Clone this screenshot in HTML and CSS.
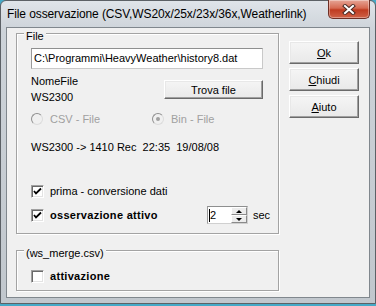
FILE: index.html
```html
<!DOCTYPE html>
<html lang="it">
<head>
    <meta charset="UTF-8">
    <title>File osservazione</title>
    <link rel="stylesheet" href="styles.css">
</head>
<body>
    <div class="window">
        <div class="titlebar">
            <span class="title">File osservazione (CSV,WS20x/25x/23x/36x,Weatherlink)</span>
            <div class="close-btn">
                <svg width="14" height="11" viewBox="0 0 14 11">
                    <path d="M3 2 L11 9 M11 2 L3 9" stroke="#4a2a24" stroke-width="4" stroke-linecap="square" fill="none"/>
                    <path d="M3 2 L11 9 M11 2 L3 9" stroke="#fff" stroke-width="2" stroke-linecap="square" fill="none"/>
                </svg>
            </div>
        </div>

        <div class="client">
            <div class="main-col">
                <div class="group file-group">
                    <span class="group-label">File</span>
                    <div class="path-input">C:\Programmi\HeavyWeather\history8.dat</div>

                    <div class="name-row">
                        <div class="name-labels">
                            <div>NomeFile</div>
                            <div>WS2300</div>
                        </div>
                        <div class="btn find-btn">Trova file</div>
                    </div>

                    <div class="radio-row">
                        <div class="radio-item csv-item">
                            <span class="radio"></span>
                            <span>CSV - File</span>
                        </div>
                        <div class="radio-item">
                            <span class="radio checked"></span>
                            <span>Bin - File</span>
                        </div>
                    </div>

                    <div class="status">WS2300 -&gt; 1410 Rec&nbsp; 22:35&nbsp; 19/08/08</div>

                    <div class="check-row first-check">
                        <span class="checkbox checked">
                            <svg width="9" height="9" viewBox="0 0 9 9"><path d="M1 4 L3 6.5 L8 1.5" stroke="#000" stroke-width="1.8" fill="none"/></svg>
                        </span>
                        <span>prima - conversione dati</span>
                    </div>

                    <div class="check-row second-check">
                        <span class="checkbox checked">
                            <svg width="9" height="9" viewBox="0 0 9 9"><path d="M1 4 L3 6.5 L8 1.5" stroke="#000" stroke-width="1.8" fill="none"/></svg>
                        </span>
                        <span class="bold-label">osservazione attivo</span>
                        <div class="spin-box">
                            <div class="spin-field"><span class="caret"></span>2</div>
                            <div class="spin-arrows">
                                <div class="spin-btn"><span class="arrow-up"></span></div>
                                <div class="spin-btn"><span class="arrow-down"></span></div>
                            </div>
                        </div>
                        <span class="unit">sec</span>
                    </div>
                </div>

                <div class="group merge-group">
                    <span class="group-label">(ws_merge.csv)</span>
                    <div class="check-row">
                        <span class="checkbox"></span>
                        <span class="bold-label">attivazione</span>
                    </div>
                </div>
            </div>

            <div class="side-buttons">
                <div class="btn side-btn"><u>O</u>k</div>
                <div class="btn side-btn"><u>C</u>hiudi</div>
                <div class="btn side-btn"><u>A</u>iuto</div>
            </div>
        </div>
    </div>
</body>
</html>
```

FILE: styles.css
```css
* {
    box-sizing: border-box;
}

body {
    margin: 0;
    background-color: #45a9c7;
    font-family: 'Liberation Sans', Arial, sans-serif;
    font-size: 11px;
    color: #000;
}

.window {
    width: 376px;
    height: 304px;
    display: flex;
    flex-direction: column;
    padding: 0 5px 5px 5px;
    border: 1px solid #5c6166;
    border-radius: 6px 6px 0 0;
    background: linear-gradient(#dfe4e9, #cdd3d9 30px, #c1c7cd);
}

.titlebar {
    height: 26px;
    display: flex;
    align-items: center;
}

.title {
    padding-left: 1px;
    font-size: 12px;
    letter-spacing: -0.1px;
    color: #000;
    white-space: nowrap;
}

.close-btn {
    margin-left: auto;
    align-self: flex-start;
    margin-top: -1px;
    width: 42px;
    height: 19px;
    display: flex;
    align-items: center;
    justify-content: center;
    border: 1px solid #6e2f25;
    border-top: none;
    border-radius: 0 0 5px 5px;
    background: linear-gradient(#e6a596, #d66a52 45%, #bf3b20 55%, #cf6247);
    box-shadow: inset 0 0 0 1px rgba(255, 255, 255, 0.35);
}

.client {
    flex: 1;
    display: flex;
    align-items: flex-start;
    background-color: #f0f0f0;
    border: 1px solid #80878d;
}

.main-col {
    padding: 5px 0 0 9px;
}

.group {
    position: relative;
    width: 263px;
    border: 1px solid #a3a3a3;
    box-shadow: inset 1px 1px #fff, 1px 1px #fff;
}

.group-label {
    position: absolute;
    top: -4px;
    left: 7px;
    padding: 0 2px;
    line-height: 13px;
    background-color: #f0f0f0;
}

.file-group {
    height: 201px;
    padding: 14px 0 0 14px;
}

.path-input {
    width: 232px;
    height: 21px;
    padding: 0 2px;
    line-height: 19px;
    background-color: #fff;
    border: 1px solid;
    border-color: #8e8f8f #c9c9c9 #c9c9c9 #9a9a9a;
    white-space: nowrap;
}

.name-row {
    display: flex;
    margin-top: 4px;
}

.name-labels {
    width: 132px;
    line-height: 16px;
}

.btn {
    display: flex;
    align-items: center;
    justify-content: center;
    border: 1px solid;
    border-color: #fff #6a6a6a #6a6a6a #fff;
    background: linear-gradient(#f5f5f5, #e9e9e9);
    box-shadow: inset -1px -1px #a0a0a0, inset 1px 1px #e8e8e8;
}

.find-btn {
    width: 99px;
    height: 19px;
    margin-top: 7px;
    margin-left: 1px;
}

.radio-row {
    display: flex;
    margin-top: 6px;
    line-height: 16px;
    color: #a0a0a0;
}

.radio-item {
    display: flex;
    align-items: center;
    gap: 7px;
}

.csv-item {
    width: 121px;
}

.radio {
    width: 12px;
    height: 12px;
    display: flex;
    align-items: center;
    justify-content: center;
    border-radius: 50%;
    border: 1px solid;
    border-color: #8f8f8f #dcdcdc #dcdcdc #8f8f8f;
    background-color: #f0f0f0;
}

.radio.checked::after {
    content: "";
    width: 4px;
    height: 4px;
    border-radius: 50%;
    background-color: #a0a0a0;
}

.status {
    margin-top: 12px;
    line-height: 16px;
    white-space: nowrap;
}

.check-row {
    display: flex;
    align-items: center;
    line-height: 16px;
    white-space: nowrap;
}

.first-check {
    margin-top: 28px;
}

.second-check {
    margin-top: 7px;
}

.checkbox {
    width: 13px;
    height: 13px;
    margin-right: 6px;
    display: flex;
    align-items: center;
    justify-content: center;
    background-color: #fff;
    border: 1px solid;
    border-color: #a0a0a0 #fff #fff #a0a0a0;
    box-shadow: inset 1px 1px #696969, inset -1px -1px #e3e3e3;
}

.bold-label {
    font-weight: bold;
    letter-spacing: 0.3px;
}

.second-check .bold-label {
    width: 157px;
}

.spin-box {
    width: 41px;
    height: 18px;
    display: flex;
    background-color: #fff;
    border: 1px solid;
    border-color: #8e8f8f #d0d0d0 #d0d0d0 #9a9a9a;
}

.spin-field {
    flex: 1;
    display: flex;
    align-items: center;
    padding-left: 1px;
}

.caret {
    width: 1px;
    height: 13px;
    background-color: #000;
}

.spin-arrows {
    width: 16px;
    display: flex;
    flex-direction: column;
}

.spin-btn {
    flex: 1;
    display: flex;
    align-items: center;
    justify-content: center;
    background-color: #ececec;
    border: 1px solid;
    border-color: #fff #8a8a8a #8a8a8a #fff;
}

.arrow-up {
    border-left: 3px solid transparent;
    border-right: 3px solid transparent;
    border-bottom: 3px solid #000;
}

.arrow-down {
    border-left: 3px solid transparent;
    border-right: 3px solid transparent;
    border-top: 3px solid #000;
}

.unit {
    margin-left: 5px;
}

.merge-group {
    height: 41px;
    margin-top: 16px;
    padding: 17px 0 0 14px;
}

.side-buttons {
    display: flex;
    flex-direction: column;
    gap: 4px;
    padding: 13px 0 0 10px;
}

.side-btn {
    width: 70px;
    height: 23px;
}
```
